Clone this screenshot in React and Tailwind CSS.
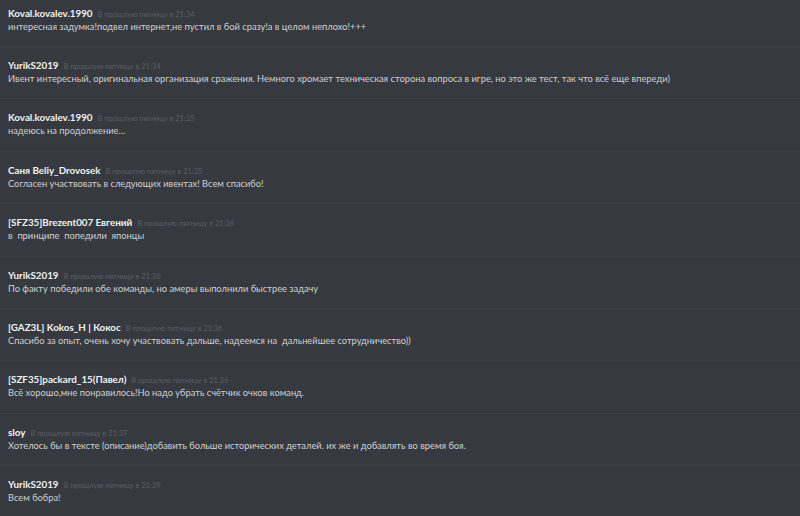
import React from 'react';

const messages = [
  { author: 'Koval.kovalev.1990', time: '21:34', text: 'интересная задумка!подвел интернет,не пустил в бой сразу!а в целом неплохо!+++' },
  { author: 'YurikS2019', time: '21:34', text: 'Ивент интересный, оригинальная организация сражения. Немного хромает техническая сторона вопроса в игре, но это же тест, так что всё еще впереди)' },
  { author: 'Koval.kovalev.1990', time: '21:35', text: 'надеюсь на продолжение...' },
  { author: 'Саня Beliy_Drovosek', time: '21:35', text: 'Согласен участвовать в следующих ивентах! Всем спасибо!' },
  { author: '[SFZ35]Brezent007 Евгений', time: '21:36', text: 'в  принципе  попедили  японцы' },
  { author: 'YurikS2019', time: '21:36', text: 'По факту победили обе команды, но амеры выполнили быстрее задачу' },
  { author: '[GAZ3L] Kokos_H | Кокос', time: '21:36', text: 'Спасибо за опыт, очень хочу участвовать дальше, надеемся на  дальнейшее сотрудничество))' },
  { author: '[SZF35]packard_15(Павел)', time: '21:36', text: 'Всё хорошо,мне понравилось!Но надо убрать счётчик очков команд.' },
  { author: 'sloy', time: '21:37', text: 'Хотелось бы в тексте (описание)добавить больше исторических деталей. их же и добавлять во время боя.' },
  { author: 'YurikS2019', time: '21:39', text: 'Всем бобра!' },
];

const Message = ({ author, time, text, first }) => (
  <div
    className={`border-t px-2 ${
      first ? 'border-transparent pt-[5px] pb-3' : 'border-[#3d4047] pt-[11px] pb-[12.4px]'
    }`}
  >
    <div className="flex h-[14px] items-baseline gap-[5px] leading-[14px] whitespace-nowrap overflow-hidden">
      <span className="text-[9.8px] font-bold text-[#f2f3f5]">{author}</span>
      <span className="text-[7.5px] text-[#5b5e65]">В прошлую пятницу в {time}</span>
    </div>
    <p className="h-[14px] text-[9.3px] leading-[14px] text-[#cfd0d2] whitespace-pre">{text}</p>
  </div>
);

export default function App() {
  return (
    <div
      className="w-[800px] h-[516px] overflow-hidden bg-[#36393f]"
      style={{ fontFamily: 'Lato, "Noto Sans", sans-serif' }}
    >
      {messages.map((m, i) => (
        <Message key={i} {...m} first={i === 0} />
      ))}
    </div>
  );
}
